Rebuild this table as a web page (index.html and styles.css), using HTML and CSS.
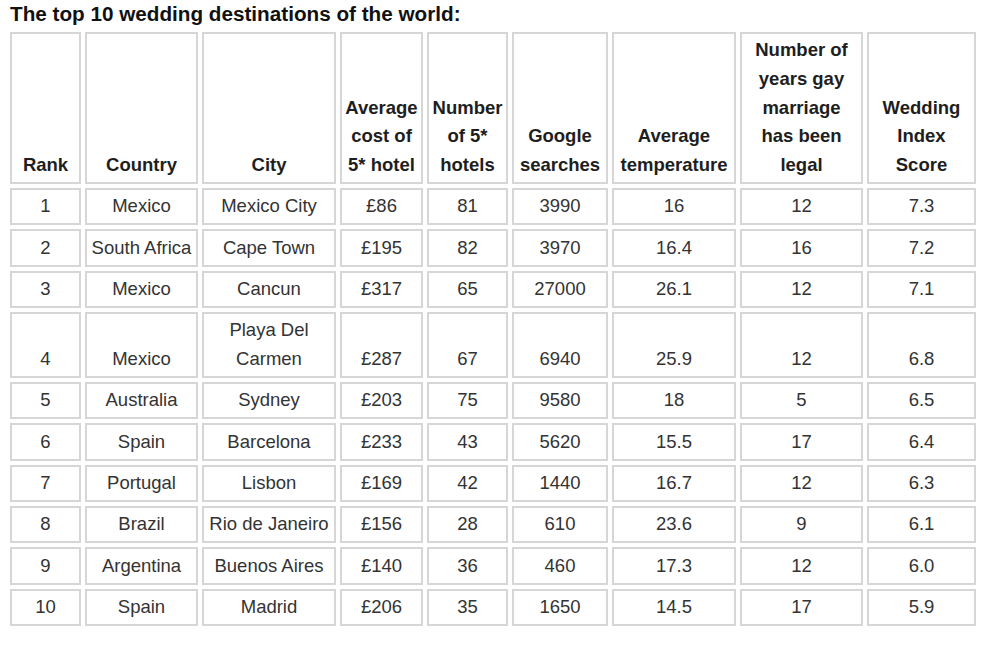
FILE: index.html
```html
<!DOCTYPE html>
<html>
<head>
<meta charset="utf-8">
<link rel="stylesheet" href="styles.css">
</head>
<body>
<div class="page">
  <h1 class="title">The top 10 wedding destinations of the world:</h1>
  <table class="dest">
    <colgroup>
      <col class="c-rank"><col class="c-country"><col class="c-city"><col class="c-cost"><col class="c-num"><col class="c-google"><col class="c-temp"><col class="c-years"><col class="c-score">
    </colgroup>
    <thead>
      <tr>
        <th>Rank</th>
        <th>Country</th>
        <th>City</th>
        <th>Average<br>cost of<br>5* hotel</th>
        <th>Number<br>of 5*<br>hotels</th>
        <th>Google<br>searches</th>
        <th>Average<br>temperature</th>
        <th>Number of<br>years gay<br>marriage<br>has been<br>legal</th>
        <th>Wedding<br>Index<br>Score</th>
      </tr>
    </thead>
    <tbody>
      <tr><td>1</td><td>Mexico</td><td>Mexico City</td><td>£86</td><td>81</td><td>3990</td><td>16</td><td>12</td><td>7.3</td></tr>
      <tr><td>2</td><td>South Africa</td><td>Cape Town</td><td>£195</td><td>82</td><td>3970</td><td>16.4</td><td>16</td><td>7.2</td></tr>
      <tr><td>3</td><td>Mexico</td><td>Cancun</td><td>£317</td><td>65</td><td>27000</td><td>26.1</td><td>12</td><td>7.1</td></tr>
      <tr><td>4</td><td>Mexico</td><td>Playa Del<br>Carmen</td><td>£287</td><td>67</td><td>6940</td><td>25.9</td><td>12</td><td>6.8</td></tr>
      <tr><td>5</td><td>Australia</td><td>Sydney</td><td>£203</td><td>75</td><td>9580</td><td>18</td><td>5</td><td>6.5</td></tr>
      <tr><td>6</td><td>Spain</td><td>Barcelona</td><td>£233</td><td>43</td><td>5620</td><td>15.5</td><td>17</td><td>6.4</td></tr>
      <tr><td>7</td><td>Portugal</td><td>Lisbon</td><td>£169</td><td>42</td><td>1440</td><td>16.7</td><td>12</td><td>6.3</td></tr>
      <tr><td>8</td><td>Brazil</td><td>Rio de Janeiro</td><td>£156</td><td>28</td><td>610</td><td>23.6</td><td>9</td><td>6.1</td></tr>
      <tr><td>9</td><td>Argentina</td><td>Buenos Aires</td><td>£140</td><td>36</td><td>460</td><td>17.3</td><td>12</td><td>6.0</td></tr>
      <tr><td>10</td><td>Spain</td><td>Madrid</td><td>£206</td><td>35</td><td>1650</td><td>14.5</td><td>17</td><td>5.9</td></tr>
    </tbody>
  </table>
</div>
</body>
</html>
```

FILE: styles.css
```css
html, body {
  margin: 0;
  padding: 0;
  background: #ffffff;
}

.page {
  padding: 2px 0 0 6px;
  font-family: "Liberation Sans", Arial, sans-serif;
}

.title {
  margin: 0 0 2px 4px;
  font-size: 20.7px;
  line-height: 24px;
  font-weight: bold;
  color: #111111;
}

.dest {
  border-collapse: separate;
  border-spacing: 4px 4px;
  table-layout: fixed;
  width: 970px;
  font-size: 18.5px;
  line-height: 28.6px;
  color: #333333;
}

.dest th,
.dest td {
  border: 2px solid #d6d6d6;
  padding: 2.4px 1px;
  text-align: center;
  vertical-align: bottom;
  box-sizing: border-box;
}

.dest th {
  font-weight: bold;
  color: #1e1e1e;
}

.c-rank { width: 71px; }
.c-country { width: 113px; }
.c-city { width: 134px; }
.c-cost { width: 83px; }
.c-num { width: 81px; }
.c-google { width: 96px; }
.c-temp { width: 124px; }
.c-years { width: 123px; }
.c-score { width: 109px; }
```
